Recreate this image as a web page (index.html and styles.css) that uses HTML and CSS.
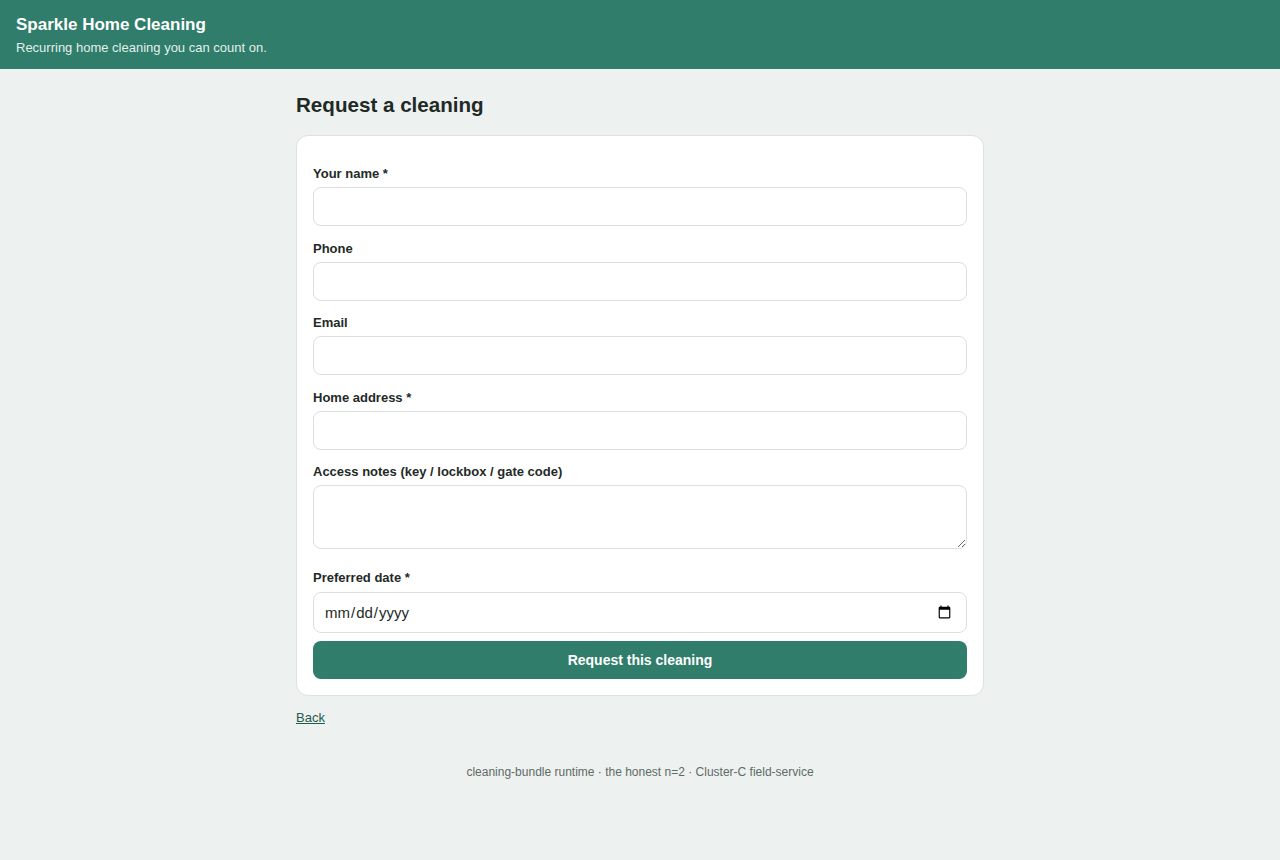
FILE: index.html
```html
<!DOCTYPE html>
<html lang="en">
<head>
  <meta charset="UTF-8">
  <meta name="viewport" content="width=device-width, initial-scale=1.0">
  <title>Request a cleaning - Sparkle Home Cleaning</title>
  <link rel="stylesheet" href="styles.css">
</head>
<body>
  <header class="site-header">
    <h1 class="site-title">Sparkle Home Cleaning</h1>
    <p class="site-tagline">Recurring home cleaning you can count on.</p>
  </header>

  <main class="page">
    <h2 class="page-title">Request a cleaning</h2>

    <!-- Booking form -->
    <form class="card request-form" onsubmit="return false;">
      <div class="field">
        <label for="name">Your name *</label>
        <input type="text" id="name" required>
      </div>
      <div class="field">
        <label for="phone">Phone</label>
        <input type="tel" id="phone">
      </div>
      <div class="field">
        <label for="email">Email</label>
        <input type="email" id="email">
      </div>
      <div class="field">
        <label for="address">Home address *</label>
        <input type="text" id="address" required>
      </div>
      <div class="field">
        <label for="access">Access notes (key / lockbox / gate code)</label>
        <textarea id="access"></textarea>
      </div>
      <div class="field field-date">
        <label for="date">Preferred date *</label>
        <input type="date" id="date" required>
      </div>
      <button type="submit" class="button">Request this cleaning</button>
    </form>

    <a href="index.html" class="back-link">Back</a>
  </main>

  <footer class="site-footer">cleaning-bundle runtime · the honest n=2 · Cluster-C field-service</footer>
</body>
</html>
```

FILE: styles.css
```css
body {
  margin: 0;
  background-color: #edf1ef;
  color: #1f2a27;
  font-family: "Liberation Sans", Arial, sans-serif;
}

.site-header {
  background-color: #2f7d6a;
  color: white;
  padding: 15px 16px 13px;
}

.site-title {
  margin: 0;
  font-size: 17px;
  line-height: 20px;
  font-weight: bold;
}

.site-tagline {
  margin: 5px 0 0;
  font-size: 13px;
  line-height: 16px;
  color: #e3efeb;
}

.page {
  max-width: 688px;
  margin: 0 auto;
  padding: 23px 16px 0;
}

.page-title {
  margin: 0 0 18px;
  font-size: 20.6px;
  line-height: 25px;
  font-weight: bold;
}

.card {
  background-color: white;
  border: 1px solid #dbe2df;
  border-radius: 12px;
  padding: 16px;
}

.field {
  margin-top: 14.5px;
}

.field:first-child {
  margin-top: 14px;
}

.field label {
  display: block;
  font-size: 13px;
  line-height: 15px;
  font-weight: bold;
  margin-bottom: 6px;
}

.field input,
.field textarea {
  display: block;
  box-sizing: border-box;
  width: 100%;
  height: 39px;
  padding: 8px 12px 8px 11px;
  border: 1px solid #d9e1de;
  border-radius: 8px;
  background-color: white;
  font-family: "Liberation Sans", Arial, sans-serif;
  font-size: 15px;
  color: #1f2a27;
}

/* extra room under the notes box before the date field */
.field textarea {
  height: 64px;
  margin-bottom: 21px;
  resize: vertical;
}

.field-date label {
  margin-bottom: 7px;
}

.field-date input {
  height: 41px;
  padding-left: 10px;
}

.button {
  display: block;
  width: 100%;
  height: 38px;
  margin-top: 8px;
  border: none;
  border-radius: 8px;
  background-color: #2f7d6a;
  color: white;
  font-family: "Liberation Sans", Arial, sans-serif;
  font-size: 14px;
  font-weight: bold;
  cursor: pointer;
}

.button:hover {
  background-color: #276a5a;
}

.back-link {
  display: inline-block;
  margin-top: 14px;
  font-size: 13px;
  line-height: 15px;
  color: #24594c;
}

.site-footer {
  margin-top: 39px;
  text-align: center;
  font-size: 12px;
  line-height: 14px;
  color: #5f6b67;
}
```
